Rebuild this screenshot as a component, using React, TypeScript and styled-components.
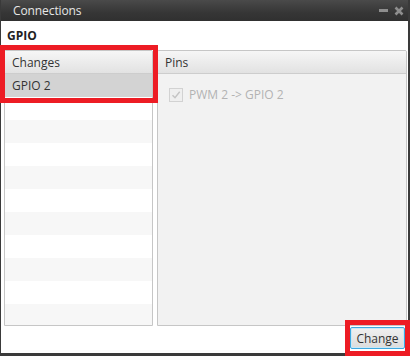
import React from "react";
import styled, { createGlobalStyle } from "styled-components";

const Global = createGlobalStyle`
  html, body { margin: 0; padding: 0; background: #ffffff; }
  body { font-family: "Open Sans", "Noto Sans", "Liberation Sans", sans-serif; font-size: 12px; }
  * { box-sizing: border-box; }
`;

const Frame = styled.div`
  position: relative;
  width: 410px;
  height: 356px;
  overflow: hidden;
`;

const Window = styled.div`
  width: 410px;
  height: 356px;
  display: flex;
  flex-direction: column;
  background: #ffffff;
  border-left: 1px solid #3a3a3a;
  border-right: 2px solid #3a3a3a;
  border-bottom: 3px solid #3a3a3a;
  overflow: hidden;
`;

const TitleBar = styled.div`
  height: 21px;
  flex: none;
  display: flex;
  align-items: center;
  padding-left: 13px;
  padding-right: 6px;
  background: linear-gradient(#4a4a4a, #363636 60%, #303030);
  color: #e6e6e6;
  font-size: 12px;
  margin-left: -1px;
  margin-right: -2px;
`;

const TitleText = styled.span`
  flex: 1;
  letter-spacing: -0.1px;
`;

const TitleButtons = styled.div`
  display: flex;
  align-items: center;
  gap: 6px;
`;

const Body = styled.div`
  flex: 1;
  display: flex;
  flex-direction: column;
  padding: 0 1px 0 3px;
`;

const Heading = styled.div`
  height: 29px;
  display: flex;
  align-items: center;
  padding-left: 3px;
  font-weight: 700;
  color: #222222;
  font-size: 12px;
`;

const Panels = styled.div`
  display: flex;
  gap: 4px;
  height: 276px;
`;

const Panel = styled.div<{ $width: number; $bg: string }>`
  width: ${(p) => p.$width}px;
  display: flex;
  flex-direction: column;
  border: 1px solid #c6c6c6;
  border-radius: 2px 2px 0 0;
  background: ${(p) => p.$bg};
  overflow: hidden;
`;

const Header = styled.div`
  height: 23px;
  flex: none;
  display: flex;
  align-items: center;
  padding-left: 7px;
  background: linear-gradient(#f6f6f6, #e2e2e2);
  border-bottom: 1px solid #cdcdcd;
  color: #333333;
`;

const Row = styled.div<{ $kind: "sel" | "odd" | "even" }>`
  height: 23px;
  flex: none;
  display: flex;
  align-items: center;
  padding-left: 7px;
  color: #333333;
  background: ${(p) =>
    p.$kind === "sel" ? "#d3d3d3" : p.$kind === "odd" ? "#f7f7f7" : "#ffffff"};
`;

const PinsBody = styled.div`
  padding: 12px 0 0 11px;
  display: flex;
  align-items: center;
  gap: 6px;
  color: #b3b3b3;
`;

const CheckBox = styled.div`
  width: 14px;
  height: 14px;
  border: 1px solid #d2d2d2;
  background: #efefef;
  display: flex;
  align-items: center;
  justify-content: center;
`;

const Footer = styled.div`
  flex: 1;
  display: flex;
  justify-content: flex-end;
  align-items: flex-start;
  padding: 1px 2px 0 0;
`;

const Button = styled.button`
  width: 55px;
  height: 22px;
  font-family: inherit;
  font-size: 12px;
  color: #333333;
  background: linear-gradient(#f0f0f0, #dcdcdc);
  border: 1px solid #3ea8e0;
  box-shadow: inset 0 0 0 1px #c9e8f7;
  border-radius: 2px;
  padding: 0;
`;

const Highlight = styled.div<{ $l: number; $t: number; $w: number; $h: number }>`
  position: absolute;
  left: ${(p) => p.$l}px;
  top: ${(p) => p.$t}px;
  width: ${(p) => p.$w}px;
  height: ${(p) => p.$h}px;
  border: 5px solid #ed1c24;
  pointer-events: none;
`;

const rows: Array<"odd" | "even"> = [];
for (let i = 0; i < 10; i++) rows.push(i % 2 === 0 ? "even" : "odd");

export default function App() {
  return (
    <>
      <Global />
      <Frame>
        <Window>
          <TitleBar>
            <TitleText>Connections</TitleText>
            <TitleButtons>
              <svg width="9" height="9" viewBox="0 0 9 9">
                <rect x="0" y="3" width="9" height="3" fill="#8e8e8e" />
              </svg>
              <svg width="10" height="10" viewBox="0 0 10 10">
                <path d="M1.5 1.5 L8.5 8.5 M8.5 1.5 L1.5 8.5" stroke="#8e8e8e" strokeWidth="2.6" />
              </svg>
            </TitleButtons>
          </TitleBar>
          <Body>
            <Heading>GPIO</Heading>
            <Panels>
              <Panel $width={149} $bg="#ffffff">
                <Header>Changes</Header>
                <Row $kind="sel">GPIO 2</Row>
                {rows.map((k, i) => (
                  <Row key={i} $kind={k} />
                ))}
              </Panel>
              <Panel $width={250} $bg="#f2f2f2">
                <Header>Pins</Header>
                <PinsBody>
                  <CheckBox>
                    <svg width="10" height="10" viewBox="0 0 10 10">
                      <path d="M1.5 5.2 L4 7.8 L8.7 1.8" fill="none" stroke="#c4c4c4" strokeWidth="1.4" />
                    </svg>
                  </CheckBox>
                  <span>PWM 2 -&gt; GPIO 2</span>
                </PinsBody>
              </Panel>
            </Panels>
            <Footer>
              <Button>Change</Button>
            </Footer>
          </Body>
        </Window>
        <Highlight $l={0} $t={45} $w={158} $h={58} />
        <Highlight $l={345} $t={320} $w={65} $h={36} />
      </Frame>
    </>
  );
}
